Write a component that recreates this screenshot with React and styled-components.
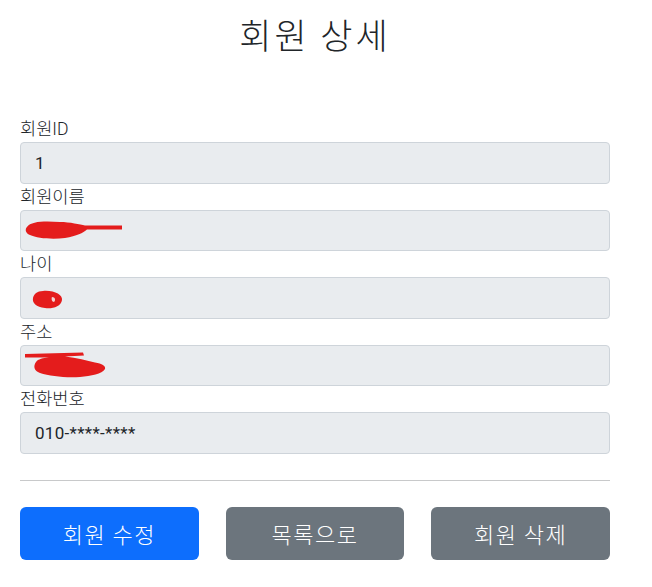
import React from 'react';
import styled, { createGlobalStyle } from 'styled-components';

const GlobalStyle = createGlobalStyle`
  body {
    margin: 0;
    background: #fff;
    color: #212529;
    font-family: Roboto, "Noto Sans CJK KR", sans-serif;
  }
`;

// red marker strokes that hide personal data in the original screenshot
function Scribble({ type }) {
  if (type === 'name') {
    return (
      <ScribbleSvg width="100" height="24" viewBox="0 0 100 24">
        <path
          d="M2 9 C6 3, 20 3, 35 4 C45 4, 55 6.5, 60 7.5 L97 7.5 L97 11.5 L62 11.5 C58 15, 52 18, 40 20 C28 21.5, 12 20.5, 5 17 C0 15, 0 11, 2 9 Z"
          fill="#e41c1c"
        />
      </ScribbleSvg>
    );
  }
  if (type === 'age') {
    return (
      <ScribbleSvg width="40" height="24" viewBox="0 0 40 24">
        <path
          d="M18 5 C29 4, 38 9, 37 14 C36 21, 27 23, 20 22 C11 21, 7 17, 8 12 C9 8, 12 5, 18 5 Z"
          fill="#e41c1c"
        />
        <path d="M27 11 C30 11, 31 14, 29 16 C27 16, 26 13, 27 11 Z" fill="#f3d4d4" />
      </ScribbleSvg>
    );
  }
  return (
    <ScribbleSvg width="82" height="28" viewBox="0 0 82 28">
      <path
        d="M0 3 L58 1.5 L59 4.5 L40 5.5 C52 7, 62 9.5, 70 11.5 C77 12.5, 81 15, 80 18 C77 23, 66 25, 55 26 C40 27, 25 25, 15 22 C9 20, 8 15, 11 11 C13 8, 18 7, 24 6.5 L0 6.5 Z"
        fill="#e41c1c"
      />
    </ScribbleSvg>
  );
}

const fields = [
  { label: '회원ID', value: '1' },
  { label: '회원이름', scribble: 'name' },
  { label: '나이', scribble: 'age' },
  { label: '주소', scribble: 'addr' },
  { label: '전화번호', value: '010-****-****' },
];

export default function App() {
  return (
    <>
      <GlobalStyle />
      <Container>
        <Title>회원 상세</Title>
        <Form>
          {fields.map((f) => (
            <Group key={f.label}>
              <Label>{f.label}</Label>
              <ReadonlyInput>
                {f.scribble ? <Scribble type={f.scribble} /> : f.value}
              </ReadonlyInput>
            </Group>
          ))}
        </Form>
        <Divider />
        <ButtonRow>
          <Button $variant="primary">회원 수정</Button>
          <Button>목록으로</Button>
          <Button>회원 삭제</Button>
        </ButtonRow>
      </Container>
    </>
  );
}

const Container = styled.div`
  width: 590px;
  margin-left: 20px;
  padding-top: 11px;
`;

const Title = styled.h2`
  margin: 0 0 59px;
  text-align: center;
  font-family: "Noto Sans CJK KR", sans-serif;
  font-weight: 300;
  font-size: 35px;
  letter-spacing: 3px;
  line-height: 46px;
`;

const Form = styled.div`
  display: flex;
  flex-direction: column;
`;

const Group = styled.div`
  display: flex;
  flex-direction: column;
`;

const Label = styled.label`
  font-family: Roboto, "Noto Sans CJK KR", sans-serif;
  font-weight: 300;
  font-size: 17.6px;
  line-height: 26px;
  height: 26px;
  color: #212529;
`;

const ReadonlyInput = styled.div`
  box-sizing: border-box;
  height: 41.5px;
  display: flex;
  align-items: center;
  padding: 0 14px;
  background: #e9ecef;
  border: 1px solid #ced4da;
  border-radius: 4px;
  font-size: 17px;
  letter-spacing: 0.3px;
  color: #212529;
`;

const ScribbleSvg = styled.svg`
  display: block;
  flex: none;
  margin-left: -10px;
`;

const Divider = styled.hr`
  margin: 26px 0;
  border: 0;
  border-top: 1px solid #c8c9ca;
`;

const ButtonRow = styled.div`
  display: grid;
  grid-template-columns: repeat(3, 1fr);
  column-gap: 27px;
`;

const Button = styled.button`
  height: 53px;
  border: none;
  border-radius: 6px;
  background: ${(p) => (p.$variant === 'primary' ? '#0d6efd' : '#6c757d')};
  color: #fff;
  font-family: "Noto Sans CJK KR", sans-serif;
  font-weight: 300;
  font-size: 22px;
  letter-spacing: 1.5px;
  line-height: 1;
  cursor: pointer;
`;
